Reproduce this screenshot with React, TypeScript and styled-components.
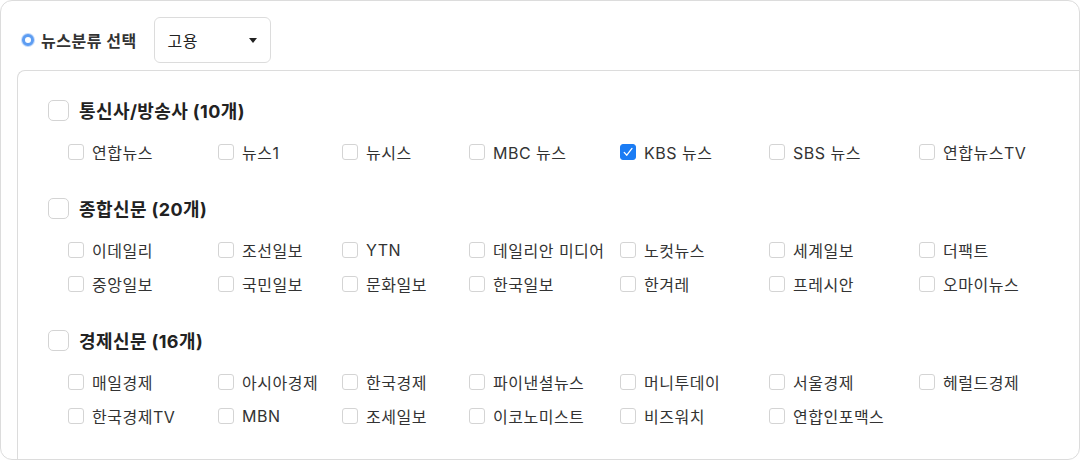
import React from 'react';
import styled, { createGlobalStyle } from 'styled-components';

const GlobalStyle = createGlobalStyle`
  html, body {
    margin: 0;
    padding: 0;
    background: #fff;
  }
  body {
    font-family: Inter, "Noto Sans CJK KR", sans-serif;
    color: #333;
  }
  * { box-sizing: border-box; }
`;

const Card = styled.div`
  width: 1080px;
  height: 460px;
  border: 1px solid #dcdcdc;
  border-radius: 12px;
  overflow: hidden;
  display: flex;
  flex-direction: column;
  background: #fff;
`;

const TopBar = styled.div`
  display: flex;
  align-items: center;
  padding: 16px 0 0 21px;
  height: 62px;
`;

const RadioDot = styled.span`
  flex: none;
  width: 12px;
  height: 12px;
  border-radius: 50%;
  border: 3px solid #5d9df2;
  background: #fff;
  box-shadow: 0 0 0 1px #c3dafb;
`;

const TopLabel = styled.span`
  margin-left: 7px;
  font-size: 16px;
  font-weight: 700;
  letter-spacing: 0.5px;
  color: #333;
`;

const Select = styled.div`
  margin-left: 17px;
  width: 117px;
  height: 46px;
  border: 1px solid #dcdcdc;
  border-radius: 6px;
  display: flex;
  align-items: center;
  justify-content: space-between;
  padding: 0 13px 0 13px;
  font-size: 16px;
  letter-spacing: 0.5px;
  color: #222;
`;

const Caret = styled.span`
  width: 0;
  height: 0;
  border-left: 4.5px solid transparent;
  border-right: 4.5px solid transparent;
  border-top: 5px solid #222;
`;

const Panel = styled.div`
  flex: 1;
  margin: 7px 0 0 16px;
  border-top: 1px solid #dcdcdc;
  border-left: 1px solid #dcdcdc;
  border-top-left-radius: 8px;
  padding: 28px 0 0 30px;
`;

const Group = styled.section`
  margin-bottom: 28px;
`;

const GroupHeader = styled.div`
  display: flex;
  align-items: center;
  gap: 10px;
  height: 22px;
  margin-bottom: 14px;
`;

const GroupTitle = styled.span`
  font-size: 18px;
  font-weight: 700;
  letter-spacing: 0.4px;
  color: #222;
`;

const Box = styled.span<{ $size: number; $checked?: boolean }>`
  flex: none;
  width: ${p => p.$size}px;
  height: ${p => p.$size}px;
  border: 1px solid ${p => (p.$checked ? '#1b7cf4' : '#d4d4d4')};
  border-radius: ${p => (p.$size > 18 ? 5 : 3)}px;
  background: ${p => (p.$checked ? '#1b7cf4' : '#fff')};
  display: flex;
  align-items: center;
  justify-content: center;
`;

const Items = styled.div`
  display: grid;
  grid-template-columns: 150px 124px 127px 151px 149px 150px auto;
  margin-left: 20px;
`;

const Item = styled.label`
  display: flex;
  align-items: center;
  gap: 8px;
  height: 34px;
  font-size: 16px;
  letter-spacing: 0.5px;
  color: #333;
  white-space: nowrap;
`;

type GroupData = { title: string; items: string[] };

const groups: GroupData[] = [
  {
    title: '통신사/방송사 (10개)',
    items: ['연합뉴스', '뉴스1', '뉴시스', 'MBC 뉴스', 'KBS 뉴스', 'SBS 뉴스', '연합뉴스TV'],
  },
  {
    title: '종합신문 (20개)',
    items: [
      '이데일리', '조선일보', 'YTN', '데일리안 미디어', '노컷뉴스', '세계일보', '더팩트',
      '중앙일보', '국민일보', '문화일보', '한국일보', '한겨레', '프레시안', '오마이뉴스',
    ],
  },
  {
    title: '경제신문 (16개)',
    items: [
      '매일경제', '아시아경제', '한국경제', '파이낸셜뉴스', '머니투데이', '서울경제', '헤럴드경제',
      '한국경제TV', 'MBN', '조세일보', '이코노미스트', '비즈워치', '연합인포맥스',
    ],
  },
];

const checked = new Set(['KBS 뉴스']);

const CheckMark = () => (
  <svg width="12" height="12" viewBox="0 0 12 12">
    <path d="M2.2 6.4 L4.8 9.2 L10 2.4" fill="none" stroke="#fff" strokeWidth="1.3" strokeLinecap="round" strokeLinejoin="round" />
  </svg>
);

export default function App() {
  return (
    <>
      <GlobalStyle />
      <Card>
        <TopBar>
          <RadioDot />
          <TopLabel>뉴스분류 선택</TopLabel>
          <Select>
            <span>고용</span>
            <Caret />
          </Select>
        </TopBar>
        <Panel>
          {groups.map(g => (
            <Group key={g.title}>
              <GroupHeader>
                <Box $size={21} />
                <GroupTitle>{g.title}</GroupTitle>
              </GroupHeader>
              <Items>
                {g.items.map(name => (
                  <Item key={name}>
                    <Box $size={16} $checked={checked.has(name)}>
                      {checked.has(name) && <CheckMark />}
                    </Box>
                    {name}
                  </Item>
                ))}
              </Items>
            </Group>
          ))}
        </Panel>
      </Card>
    </>
  );
}
